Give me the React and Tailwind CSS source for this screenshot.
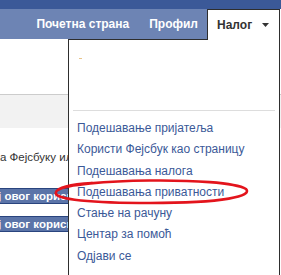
import React from "react";

const items = [
  "Подешавање пријатеља",
  "Користи Фејсбук као страницу",
  "Подешавања налога",
  "Подешавања приватности",
  "Стање на рачуну",
  "Центар за помоћ",
  "Одјави се",
];

export default function App() {
  return (
    <div
      className="relative w-[281px] h-[275px] overflow-hidden bg-white"
      style={{ fontFamily: '"Liberation Sans", Arial, sans-serif' }}
    >
      <div className="h-[9px] bg-[#3b5998]" />
      <div className="flex h-[30px]">
        <div className="w-[207px] bg-[#6d84b4] flex items-center justify-end pr-[9px] gap-[20px] text-white font-bold text-[12px]">
          <span>Почетна страна</span>
          <span>Профил</span>
        </div>
        <div className="w-[73px] bg-white border-t border-l border-r border-[#2e2e2e] flex items-center pl-[9px] text-[12px] font-bold text-[#333]">
          <span>Налог</span>
          <svg width="7" height="4" viewBox="0 0 7 4" className="ml-[10px]">
            <path d="M0 0 H7 L3.5 4 Z" fill="#333" />
          </svg>
        </div>
      </div>
      <div className="h-[55px]" />
      <div className="h-px bg-[#cccccc]" />
      <div className="h-[33px] bg-[#f2f2f2]" />
      <div className="pt-[22px] text-[11.5px] text-[#333] leading-[14px] whitespace-nowrap">
        а Фејсбуку или
      </div>
      <div className="mt-[24px] flex flex-col gap-[12px] -ml-[5px]">
        <div className="h-[16px] w-[130px] bg-[#5b74a8] border border-[#29447e] text-white font-bold text-[11.5px] leading-[14px] whitespace-nowrap pl-[2px]">
          ј овог корисника
        </div>
        <div className="h-[16px] w-[130px] bg-[#5b74a8] border border-[#29447e] text-white font-bold text-[11.5px] leading-[14px] whitespace-nowrap pl-[2px]">
          ј овог корисника
        </div>
      </div>

      <div className="absolute left-[68px] top-[39px] w-[212px] bottom-0 bg-white border-l border-r border-[#2e2e2e]">
        <div className="w-[139px] border-t border-[#2e2e2e]" />
        <div className="h-[18px]" />
        <div className="ml-[10px] w-[3px] h-[1px] bg-[#e8c48a]" />
        <div className="h-[51px]" />
        <div className="mx-[4px] h-px bg-[#dddddd]" />
        <div className="pt-[7px] pl-[8px] text-[12px] text-[#3b5998]">
          {items.map((t) => (
            <div key={t} className="h-[21.3px] leading-[21px] whitespace-nowrap">
              {t}
            </div>
          ))}
        </div>
      </div>

      <svg
        className="absolute left-0 top-0 pointer-events-none"
        width="281"
        height="275"
        viewBox="0 0 281 275"
      >
        <path
          d="M58 190 C 72 179, 225 176, 246 189 C 253 196, 225 203, 150 203 C 95 203, 52 200, 56 192 C 58 187, 75 184, 92 183"
          fill="none"
          stroke="#e3141c"
          strokeWidth="2.6"
          strokeLinecap="round"
        />
      </svg>
    </div>
  );
}
